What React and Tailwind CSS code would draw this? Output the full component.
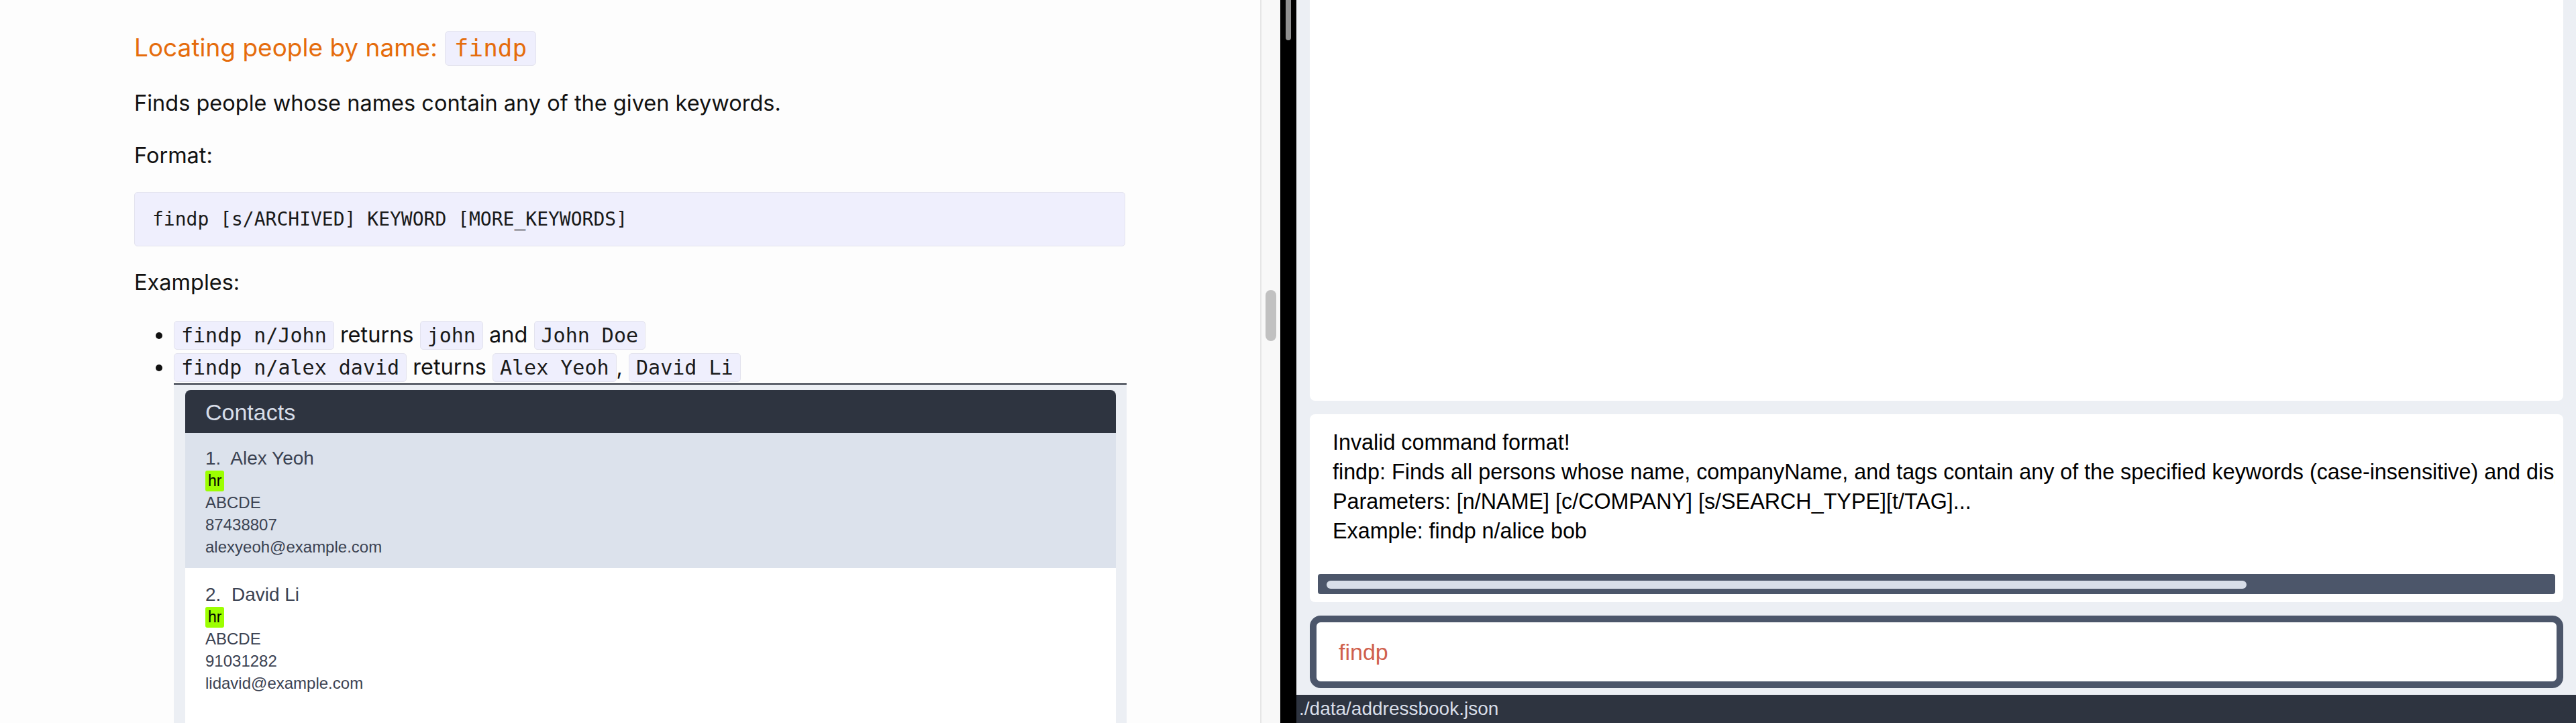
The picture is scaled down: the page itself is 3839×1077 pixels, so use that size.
import React from "react";

const mono = { fontFamily: '"DejaVu Sans Mono", "Liberation Mono", monospace' };

function Chip({ children }) {
  return (
    <code
      className="inline-block h-[43px] leading-[41px] px-[10px] rounded-[5px] border border-[#e3e3ee] bg-[#efeffd] text-[30px] text-[#1a1a1a] align-baseline"
      style={mono}
    >
      {children}
    </code>
  );
}

function ContactCard({ idx, name, phone, email, bg, top }) {
  return (
    <div className={`${bg} ${top} pl-[30px] pb-[15px]`} style={{ fontFamily: '"Liberation Sans", Arial, sans-serif' }}>
      <div className="text-[28px] leading-[36px] text-[#3b4252] whitespace-pre">{`${idx}.  ${name}`}</div>
      <div className="flex">
        <span className="h-[31px] leading-[31px] px-[4px] rounded-[3px] bg-[#9cff00] text-[23px] text-black">hr</span>
      </div>
      <div className="text-[24px] leading-[33px] text-[#3b4252]">ABCDE</div>
      <div className="text-[24px] leading-[33px] text-[#3b4252]">{phone}</div>
      <div className="text-[24px] leading-[33px] text-[#3b4252]">{email}</div>
    </div>
  );
}

export default function App() {
  return (
    <div className="flex w-[3839px] h-[1077px] overflow-hidden bg-white">
      {/* Left documentation pane */}
      <div
        className="w-[1878px] shrink-0 bg-[#fdfdfd] pl-[200px] overflow-hidden"
        style={{ fontFamily: 'Inter, "Noto Sans", sans-serif' }}
      >
        <div className="w-[1477px]">
          <h3 className="mt-[46px] flex items-baseline gap-[11px] text-[37px] leading-[48px] font-normal text-[#e56c0c]">
            <span>Locating people by name:</span>
            <span
              className="inline-block px-[13px] py-[4px] rounded-[6px] border border-[#e3e3ee] bg-[#efeffd] text-[36px] leading-[42px] text-[#e56c0c]"
              style={mono}
            >
              findp
            </span>
          </h3>
          <p className="mt-[32px] text-[32.5px] leading-[48px] text-[#111]">
            Finds people whose names contain any of the given keywords.
          </p>
          <p className="mt-[30px] text-[32.5px] leading-[48px] text-[#111]">Format:</p>
          <div className="mt-[30px] h-[81px] flex items-center pl-[26px] rounded-[5px] border border-[#e3e3ee] bg-[#efeffd]">
            <span className="text-[28px] text-[#1a1a1a] whitespace-pre" style={mono}>
              findp [s/ARCHIVED] KEYWORD [MORE_KEYWORDS]
            </span>
          </div>
          <p className="mt-[30px] text-[32.5px] leading-[48px] text-[#111]">Examples:</p>
          <ul className="mt-[30px] list-disc pl-[59px] text-[32.5px] leading-[48px] text-[#111]">
            <li>
              <Chip>findp n/John</Chip> returns <Chip>john</Chip> and <Chip>John Doe</Chip>
            </li>
            <li>
              <Chip>findp n/alex david</Chip> returns <Chip>Alex Yeoh</Chip>, <Chip>David Li</Chip>
              <div className="w-[1420px] h-[520px] border-t-2 border-[#2e3440] bg-[#eceff4] pl-[17px] pr-[16px] pt-[8px]">
                <div
                  className="h-[64px] rounded-t-[8px] bg-[#2e3440] pl-[30px] pt-[2px] text-[34px] leading-[62px] text-[#d8dee9]"
                  style={{ fontFamily: '"Liberation Sans", Arial, sans-serif' }}
                >
                  Contacts
                </div>
                <ContactCard
                  idx={1}
                  name="Alex Yeoh"
                  phone="87438807"
                  email="alexyeoh@example.com"
                  bg="bg-[#dce2ec]"
                  top="pt-[20px]"
                />
                <ContactCard
                  idx={2}
                  name="David Li"
                  phone="91031282"
                  email="lidavid@example.com"
                  bg="bg-white h-[300px]"
                  top="pt-[22px]"
                />
              </div>
            </li>
          </ul>
        </div>
      </div>

      {/* Left pane scrollbar */}
      <div className="w-[30px] shrink-0 border-l-2 border-[#e6e6e6] bg-[#f8f8f8] pt-[432px] pl-[6px] pr-[6px]">
        <div className="h-[76px] w-[16px] rounded-full bg-[#c1c1c1]" />
      </div>

      {/* Black divider with thumb */}
      <div className="w-[24px] shrink-0 bg-black px-[8px]">
        <div className="h-[60px] w-[8px] rounded-b-full bg-[#8f8f8f]" />
      </div>

      {/* Right app pane */}
      <div
        className="flex-1 min-w-0 overflow-hidden flex flex-col bg-[#eceff4]"
        style={{ fontFamily: '"Liberation Sans", Arial, sans-serif' }}
      >
        <div className="ml-[20px] mr-[19px] h-[597px] shrink-0 rounded-b-[8px] bg-white" />

        <div className="ml-[20px] mr-[19px] mt-[20px] h-[280px] shrink-0 rounded-[8px] bg-white p-[12px] flex flex-col min-w-0">
          <div className="flex-1 min-w-0 overflow-hidden pl-[22px] pt-[8px] text-[32.3px] leading-[44px] text-black whitespace-nowrap">
            <div>Invalid command format!</div>
            <div>
              findp: Finds all persons whose name, companyName, and tags contain any of the specified keywords (case-insensitive) and displays them as a list with index numbers.
            </div>
            <div>Parameters: [n/NAME] [c/COMPANY] [s/SEARCH_TYPE][t/TAG]...</div>
            <div>Example: findp n/alice bob</div>
          </div>
          <div className="h-[30px] shrink-0 rounded-[4px] bg-[#4c566a] pt-[10px] pl-[13px]">
            <div className="h-[12px] w-[1371px] rounded-full bg-[#d8dee9]" />
          </div>
        </div>

        <div className="ml-[20px] mr-[19px] mt-[20px] h-[108px] shrink-0 rounded-[16px] border-[10px] border-[#4c566a] bg-white flex items-center pl-[33px]">
          <span className="text-[34px] text-[#d0614d]">findp</span>
        </div>

        <div className="mt-[10px] flex-1 bg-[#2e3440] pl-[4px] text-[28px] leading-[42px] text-[#d8dee9]">
          ./data/addressbook.json
        </div>
      </div>
    </div>
  );
}
